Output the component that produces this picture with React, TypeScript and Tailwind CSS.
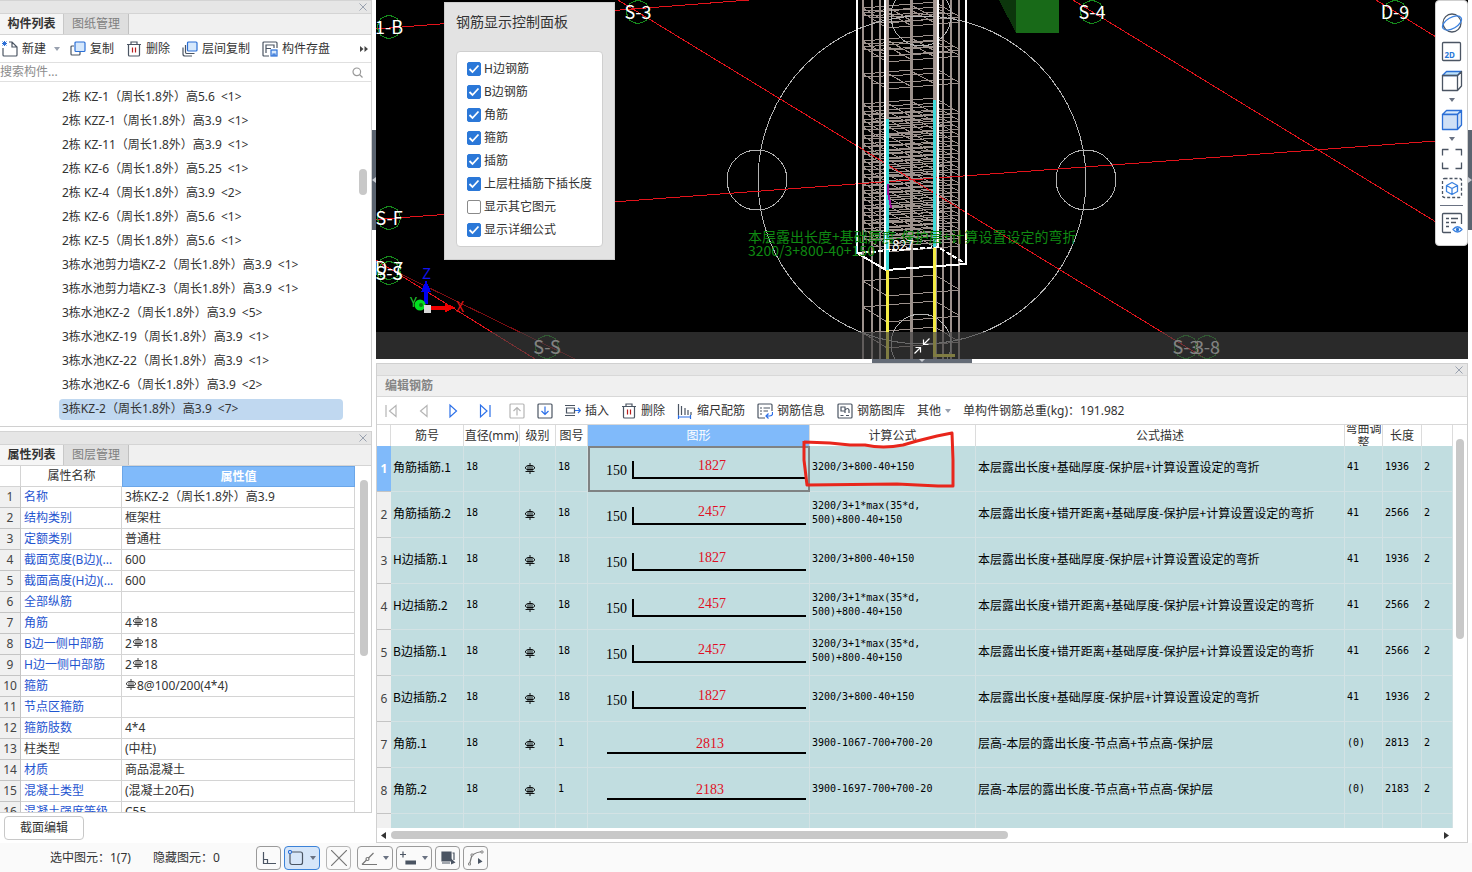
import React, { useState } from "react";

const Rebar = ({ className = "" }: { className?: string }) => (
  <svg className={"inline-block " + className} width="10" height="11" viewBox="0 0 10 11" fill="none" stroke="currentColor">
    <path d="M5 0v11M3 2.500v6M7 2.500v6M.5 8.500h9M2.500 2.500h5L9.500 4V5.500L8 6.500H2L.5 5.500V4z" strokeWidth="0.900" />
  </svg>
);

const Caret = ({ className = "text-gray-500" }: { className?: string }) => (
  <svg className={className} width="6" height="4" viewBox="0 0 6 4"><path d="M0 0h6L3 4z" fill="currentColor" /></svg>
);

const Close = () => (
  <button aria-label="关闭" className="flex h-3 w-4 items-center justify-center text-gray-400">
    <svg width="8" height="8" viewBox="0 0 8 8" stroke="currentColor"><path d="M.5.5l7 7M7.500.5l-7 7" /></svg>
  </button>
);

const Trash = () => (
  <svg width="16" height="16" viewBox="0 0 16 16" fill="none" stroke="#4b5563" strokeWidth="1.2">
    <path d="M1 3.500h14M5 3.500V1h6v2.500M2.500 3.500V14q0 1 1 1h9q1 0 1-1V3.500" />
    <path d="M6.500 6.500v5M9.500 6.500v5" stroke="#b91c1c" />
  </svg>
);

const NewIcon = () => (
  <svg width="16" height="16" viewBox="0 0 16 16" fill="none" stroke="#4b5563" strokeWidth="1.2">
    <path d="M1 7v7q0 1 1 1h12q1 0 1-1V6l-5-5H7M10 1v5h5" />
    <path d="M.5.5l4 4M4.500.5l-4 4M2.500 0v5M0 2.500h5" stroke="#2b6fd6" strokeWidth="1" />
  </svg>
);

const CopyIcon = () => (
  <svg width="16" height="16" viewBox="0 0 16 16" fill="none" strokeWidth="1.2">
    <path d="M4 5H2Q1 5 1 6v7q0 1 1 1h7q1 0 1-1v-2" stroke="#4b5563" />
    <rect x="5" y="1" width="10" height="9.500" rx="1" fill="#d6e8fc" stroke="#2b6fd6" />
  </svg>
);

const LayerCopyIcon = () => (
  <svg width="16" height="16" viewBox="0 0 16 16" fill="none" strokeWidth="1.2">
    <path d="M3.500 4v7q0 1.500 1 1.500h8M1 6.500V13q0 2 2 2h7" stroke="#4b5563" />
    <rect x="5.500" y="1" width="9.500" height="9" rx="1" fill="#d6e8fc" stroke="#2b6fd6" />
  </svg>
);

const SaveIcon = () => (
  <svg width="16" height="16" viewBox="0 0 16 16" fill="none" stroke="#4b5563" strokeWidth="1.2">
    <path d="M7 15H2q-1 0-1-1V2q0-1 1-1h12q1 0 1 1v5M4 12V4h8v3M4 7.500h5" />
    <rect x="9" y="9" width="6" height="6" fill="#d6e8fc" stroke="#2b6fd6" />
    <path d="M11 15v-2h2v2" stroke="#2b6fd6" />
  </svg>
);

const toolBtn = "flex items-center gap-1 whitespace-nowrap";

function PanelHead({ tabs }: { tabs: string[] }) {
  return (
    <>
      <div className="flex h-[13px] shrink-0 justify-end border-t border-[#d4d4d4] bg-[#e6e6e6]"><Close /></div>
      <div className="flex h-[22px] shrink-0 border-y border-[#d4d4d4] bg-[#f0f0f0]">
        <button className="w-16 border-r border-[#c8c8c8] bg-[#f5f5f5] font-bold">{tabs[0]}</button>
        <button className="w-[65px] border-r border-[#c0c0c0] bg-[#dedede] text-[#808080]">{tabs[1]}</button>
      </div>
    </>
  );
}

const members: [string, number][] = [
  ["2栋 KZ-1（周长1.8外）高5.6", 1],
  ["2栋 KZZ-1（周长1.8外）高3.9", 1],
  ["2栋 KZ-11（周长1.8外）高3.9", 1],
  ["2栋 KZ-6（周长1.8外）高5.25", 1],
  ["2栋 KZ-4（周长1.8外）高3.9", 2],
  ["2栋 KZ-6（周长1.8外）高5.6", 1],
  ["2栋 KZ-5（周长1.8外）高5.6", 1],
  ["3栋水池剪力墙KZ-2（周长1.8外）高3.9", 1],
  ["3栋水池剪力墙KZ-3（周长1.8外）高3.9", 1],
  ["3栋水池KZ-2（周长1.8外）高3.9", 5],
  ["3栋水池KZ-19（周长1.8外）高3.9", 1],
  ["3栋水池KZ-22（周长1.8外）高3.9", 1],
  ["3栋水池KZ-6（周长1.8外）高3.9", 2],
  ["3栋KZ-2（周长1.8外）高3.9", 7],
];

function MemberPanel() {
  return (
    <section className="flex h-[427px] shrink-0 flex-col border-b border-r border-[#d0d0d0]">
      <PanelHead tabs={["构件列表", "图纸管理"]} />
      <div className="flex h-7 shrink-0 items-center border-b border-[#e0e0e0] pl-0.5">
        <button className={toolBtn}><NewIcon />新建<span className="pl-1"><Caret className="text-gray-400" /></span></button>
        <button className={toolBtn + " ml-2.5"}><CopyIcon />复制</button>
        <button className={toolBtn + " ml-3"}><Trash />删除</button>
        <button className={toolBtn + " ml-3"}><LayerCopyIcon />层间复制</button>
        <button className={toolBtn + " ml-3"}><SaveIcon />构件存盘</button>
        <button aria-label="更多" className="ml-auto mr-0.5 flex h-5 w-2.5 items-center justify-center">
          <svg width="8" height="6" viewBox="0 0 8 6" fill="#444"><path d="M0 0l3.500 3L0 6zM4.500 0L8 3 4.500 6z" /></svg>
        </button>
      </div>
      <label className="flex h-[19px] shrink-0 items-center border-b border-[#e0e0e0] pr-2">
        <input aria-label="搜索构件" placeholder="搜索构件..." className="min-w-0 flex-1 outline-none placeholder:text-[#8c8c8c]" />
        <svg width="11" height="11" viewBox="0 0 11 11" fill="none" stroke="#999" strokeWidth="1.2"><circle cx="4.800" cy="4.800" r="3.800" /><path d="M7.500 7.500l3 3" /></svg>
      </label>
      <div className="flex min-h-0 flex-1 pt-[3px]">
        <ul className="flex-1 pl-[59px]">
          {members.map(([name, count], i) => (
            <li key={i} className="flex h-6 items-center">
              <button className={"flex h-[21px] w-[284px] items-center gap-1.5 whitespace-nowrap rounded-sm pl-[3px] text-left " + (i === 13 ? "bg-[#c0d8f0]" : "")}>
                <span>{name}</span><span>{`<${count}>`}</span>
              </button>
            </li>
          ))}
        </ul>
        <div className="w-3 pt-[84px]"><div className="h-[26px] w-2 rounded-full bg-[#c8c8c8]" /></div>
      </div>
    </section>
  );
}

const props: [string, React.ReactNode][] = [
  ["名称", "3栋KZ-2（周长1.8外）高3.9"],
  ["结构类别", "框架柱"],
  ["定额类别", "普通柱"],
  ["截面宽度(B边)(...", "600"],
  ["截面高度(H边)(...", "600"],
  ["全部纵筋", ""],
  ["角筋", <>4<Rebar className="mx-px mb-1" />18</>],
  ["B边一侧中部筋", <>2<Rebar className="mx-px mb-1" />18</>],
  ["H边一侧中部筋", <>2<Rebar className="mx-px mb-1" />18</>],
  ["箍筋", <><Rebar className="mx-px mb-1" />8@100/200(4*4)</>],
  ["节点区箍筋", ""],
  ["箍筋肢数", "4*4"],
  ["柱类型", "(中柱)"],
  ["材质", "商品混凝土"],
  ["混凝土类型", "(混凝土20石)"],
  ["混凝土强度等级", "C55"],
];

function PropertyPanel() {
  return (
    <section className="flex min-h-0 flex-1 flex-col">
      <div className="flex min-h-0 flex-1 flex-col overflow-hidden border-b border-r border-[#d0d0d0]">
        <PanelHead tabs={["属性列表", "图层管理"]} />
        <div className="flex min-h-0 flex-1 overflow-hidden">
          <table className="h-fit flex-1 table-fixed border-separate border-spacing-0">
            <colgroup><col className="w-[21px]" /><col className="w-[101px]" /><col /></colgroup>
            <thead>
              <tr className="h-[21px]">
                <th className="border-b border-r border-[#d4d4d4]" />
                <th className="border-b border-[#d4d4d4] font-normal">属性名称</th>
                <th className="border border-[#6ba6e8] bg-[#80bafa] text-white">属性值</th>
              </tr>
            </thead>
            <tbody>
              {props.map(([k, v], i) => (
                <tr key={i} className="h-[21px]">
                  <td className="border-b border-r border-[#c4c4c4] bg-[#f0f0f0] text-center text-[#444]">{i + 1}</td>
                  <td className={"overflow-hidden whitespace-nowrap border-b border-r border-[#d4d4d4] pl-[3px] " + (i === 12 ? "" : "text-[#1f55d0]")}>{k}</td>
                  <td className="whitespace-nowrap border-b border-r border-[#d4d4d4] pl-[3px]">{v}</td>
                </tr>
              ))}
            </tbody>
          </table>
          <div className="w-4 pl-[5px] pt-[14px]"><div className="h-[176px] w-2 rounded-full bg-[#c8c8c8]" /></div>
        </div>
      </div>
      <div className="flex h-[30px] shrink-0 items-center pl-1">
        <button className="h-6 w-20 rounded border border-[#c8c8c8] bg-white">截面编辑</button>
      </div>
    </section>
  );
}

const tieLevels = [8, 13, 41, 47, 74, 104, 112, 120, 127, 136, 144, 152, 160, 167, 175, 183, 191, 198, 206, 213, 221, 229, 237, 281, 307, 333];
const bars: [number, number][] = [[863, 2], [872, 2], [880, 2], [887.5, 3], [911.5, 3], [935, 4], [943, 2], [951, 2], [959, 2]];
const gridLabels: [number, number, string][] = [[389, 27, "1-B"], [638, 12, "S-3"], [389, 218, "S-F"], [389, 268, "D-7"], [389, 273, "S-S"], [1092, 12, "S-4"], [1395, 12, "D-9"], [547, 347, "S-S"], [1186, 347, "S-3"], [1207, 347, "3-8"]];

function Scene() {
  return (
    <svg className="block h-full w-full" viewBox="376 0 1092 359" preserveAspectRatio="xMidYMid slice" fill="none" shapeRendering="crispEdges">
      <path d="M999 0h17v33z" fill="#0c360c" />
      <path d="M1016 0h43v33h-43z" fill="#186a18" />
      <g stroke="#9c918c">
        {bars.map(([x, w]) => <path key={x} d={`M${x} 0V359`} strokeWidth={w} />)}
        {tieLevels.map((y) => (
          <g key={y}>
            <path d={`M863 ${y}L935 ${y - 6}L960 ${y + 9}L887 ${y + 15}Z`} />
            {y < 250 && <path d={`M863 ${y + 3}L943 ${y - 1}M872 ${y + 10}L954 ${y + 5}M885 ${y - 2}L912 ${y + 13}M909 ${y - 4}L937 ${y + 11}`} />}
          </g>
        ))}
      </g>
      <g stroke="#b4b4b4">
        <circle cx="922" cy="180" r="164" />
        <circle cx="757" cy="180" r="30" />
        <circle cx="1086" cy="180" r="30" />
        <circle cx="921" cy="16" r="30" />
        <circle cx="921" cy="344" r="30" />
      </g>
      <g stroke="#e3131b">
        <path d="M376 262L575 359" stroke="#7d0d12" />
        <path d="M376 29L762 -1M618 0L1206 359M376 219.500L1436 141M1073 0L1436 222M1376 0L1436 37M376 260L535 359" />
      </g>
      <g stroke="#fff" strokeWidth="2">
        <path d="M857 0V253L886 270L966 264V0M885 0V270M938 0V247" />
        <path d="M857 253L938 247L966 264" strokeDasharray="5 2" />
      </g>
      <path d="M887.500 0V119M935 0V100" stroke="#a59691" strokeWidth="3" />
      <path d="M887.500 119V270M934.500 100V247" stroke="#3fdcdc" strokeWidth="3" />
      <path d="M887.500 270V359M934.500 248V355H955" stroke="#f3ec45" strokeWidth="3" />
      <path d="M888 184V192L891 208" stroke="#a0109a" strokeWidth="2" />
      <g fill="#0f8a12" fontSize="14">
        <text x="748" y="242">本层露出长度+基础厚度-保护层+计算设置设定的弯折</text>
        <text x="748" y="256">3200/3+800-40+150</text>
      </g>
      <text x="885" y="250" fontSize="13" fill="#fff">1827</text>
      {gridLabels.map(([x, y, t], i) => (
        <g key={i}>
          <path d={`M${x} ${y - 12}l8.500 3.500 3.500 8.500-3.500 8.500-8.500 3.500-8.500-3.500-3.500-8.500 3.500-8.500z`} stroke="#168a1c" />
          <text x={x} y={y + 7} fontSize="18" fill="#fff" textAnchor="middle">{t}</text>
        </g>
      ))}
      <path d="M430 306h15v-3l10 4.500-10 5v-3h-15z" fill="#f00000" />
      <path d="M424 304v-12h-3l5-12 5 12h-3v12z" fill="#0000f0" />
      <g shapeRendering="auto">
        <circle cx="420" cy="305" r="5.500" fill="#00e020" />
        <circle cx="421" cy="305" r="2" fill="#087a14" />
      </g>
      <path d="M424 305h7v8h-7z" fill="#d8d8d8" />
      <text x="422" y="279" fontSize="15" fill="#1414f0">Z</text>
      <text x="456" y="312" fontSize="14" fill="#e01818">X</text>
      <text x="410" y="307" fontSize="13" fill="#20c830">Y</text>
    </svg>
  );
}

const options = ["H边钢筋", "B边钢筋", "角筋", "箍筋", "插筋", "上层柱插筋下插长度", "显示其它图元", "显示详细公式"];

function DisplayDialog() {
  const [on, setOn] = useState(options.map((_, i) => i !== 6));
  return (
    <div role="dialog" aria-label="钢筋显示控制面板" className="absolute left-[68px] top-0.5 w-[171px] border border-[#cfcfcf] bg-[#e3e3e3] px-[11px] pb-3">
      <h2 className="pt-[7px] text-sm leading-6 text-[#333]">钢筋显示控制面板</h2>
      <div className="mt-[17px] rounded border border-[#cfcfcf] bg-white px-[10px] py-[5px]">
        {options.map((o, i) => (
          <label key={o} className="flex h-[23px] items-center gap-[3px] whitespace-nowrap">
            <span className="relative block size-3.5">
              <input type="checkbox" checked={on[i]} onChange={() => setOn(on.map((v, j) => (j === i ? !v : v)))} className="block size-3.5 appearance-none rounded-[2px] border border-[#8a8a8a] bg-white checked:border-[#2b78d8] checked:bg-[#2b78d8]" />
              {on[i] && <svg className="pointer-events-none absolute inset-0" width="14" height="14" viewBox="0 0 14 14" fill="none" stroke="#fff" strokeWidth="1.800"><path d="M2.500 7l3 3 6-6.500" /></svg>}
            </span>
            {o}
          </label>
        ))}
      </div>
    </div>
  );
}

const I = ({ children }: { children: React.ReactNode }) => (
  <svg width="22" height="22" viewBox="0 0 22 22" fill="none" stroke="#4b5563" strokeWidth="1.300" strokeLinejoin="round">{children}</svg>
);

function ViewTools() {
  return (
    <div className="absolute right-0 top-0 flex h-[246px] w-[33px] flex-col items-center rounded border border-[#cfcfcf] bg-white pt-[11px]">
      <button aria-label="动态观察" className="mb-[7px]"><I><circle cx="11" cy="11" r="9" /><ellipse cx="11" cy="11" rx="10.500" ry="5.500" transform="rotate(-30 11 11)" stroke="#3b82e0" /></I></button>
      <button aria-label="二维" className="mb-[7px]"><I><rect x="1.500" y="1.500" width="18" height="18" rx="1" /><text x="3.500" y="17" fontSize="8" fontWeight="700" fill="#2b78d8" stroke="none">2D</text></I></button>
      <button aria-label="俯视" className="mb-1.5"><I><path d="M1.500 5.500l4-4h15l-4 4z" fill="#bfe3fa" stroke="#2b6fd6" /><path d="M1.500 5.500h15v15h-15zM16.500 5.500l4-4V16l-4 4.500" /></I></button>
      <button aria-label="俯视选项" className="mb-[7px]"><Caret /></button>
      <button aria-label="着色" className="mb-1.5"><I><path d="M1.500 5.500l4-4h15l-4 4z" fill="#d6e8fc" stroke="#2b6fd6" /><path d="M1.500 5.500h15v15h-15zM16.500 5.500l4-4V16l-4 4.500" fill="#cfe0f6" stroke="#2b6fd6" /></I></button>
      <button aria-label="着色选项" className="mb-[7px]"><Caret /></button>
      <button aria-label="全屏" className="mb-[7px]"><I><path d="M1.500 7.500v-6h6M14.500 1.500h6v6M20.500 14.500v6h-6M7.500 20.500h-6v-6" /></I></button>
      <button aria-label="局部三维" className="mb-1.5"><I><rect x="1.500" y="1.500" width="19" height="19" rx="2" strokeDasharray="3 2" /><path d="M11 5.500l5.500 3v6L11 17.500l-5.500-3v-6zM5.500 8.500L11 11.500l5.500-3M11 11.500v6" stroke="#3b82e0" /></I></button>
      <div className="mb-1.5 h-px w-[23px] shrink-0 bg-gray-500" />
      <button aria-label="显示设置"><I><path d="M10 20.500H2.500q-1 0-1-1v-17q0-1 1-1h17q1 0 1 1V12M5 6.500h3M10 6.500h7M5 10.500h3M10 10.500h5M5 14.500h3" /><path d="M12 17.500q4.500-5.500 9 0q-4.500 5-9 0z" stroke="#3b82e0" /><circle cx="16.500" cy="17.500" r="1" fill="#2b78d8" stroke="#2b78d8" /></I></button>
    </div>
  );
}

type Row = { n: string; t: string; len: string; f: string; d: string; adj: string; red: string };
const F1 = "3200/3+800-40+150";
const F2 = "3200/3+1*max(35*d,\n500)+800-40+150";
const D1 = "本层露出长度+基础厚度-保护层+计算设置设定的弯折";
const D2 = "本层露出长度+错开距离+基础厚度-保护层+计算设置设定的弯折";
const D3 = "层高-本层的露出长度-节点高+节点高-保护层";
const bent = (n: string, red: string): Row =>
  red === "1827" ? { n, t: "18", len: "1936", f: F1, d: D1, adj: "41", red } : { n, t: "18", len: "2566", f: F2, d: D2, adj: "41", red };
const rows: Row[] = [
  bent("角筋插筋.1", "1827"),
  bent("角筋插筋.2", "2457"),
  bent("H边插筋.1", "1827"),
  bent("H边插筋.2", "2457"),
  bent("B边插筋.1", "2457"),
  bent("B边插筋.2", "1827"),
  { n: "角筋.1", t: "1", len: "2813", f: "3900-1067-700+700-20", d: D3, adj: "(0)", red: "2813" },
  { n: "角筋.2", t: "1", len: "2183", f: "3900-1697-700+700-20", d: D3, adj: "(0)", red: "2183" },
];

const Shape = ({ row }: { row: Row }) => (
  <svg className="mx-auto block" width="218" height="42" viewBox="0 0 218 42" fill="none" stroke="#000" strokeWidth="2" fontSize="14" fontFamily="'Liberation Serif', serif">
    {row.t === "18" ? (
      <>
        <path d="M43 13V30H216" />
        <text x="16" y="27" fill="#000" stroke="none">150</text>
        <text x="108" y="22" fill="#e00f24" stroke="none">{row.red}</text>
      </>
    ) : (
      <>
        <path d="M17 29H216" />
        <text x="106" y="24" fill="#e00f24" stroke="none">{row.red}</text>
      </>
    )}
  </svg>
);

const mono = "font-['DejaVu_Sans_Mono','Noto_Sans_CJK_SC',monospace] text-[10px] leading-3.5";
const cell = "border-b border-r border-[#d3e2e4] pl-0.5 pb-1 ";
const head = "h-5 border-r border-[#dcdcdc] p-0 font-normal";

function RebarTable() {
  const cols: [string, string][] = [["", "w-[14px]"], ["筋号", "w-[73px]"], ["直径(mm)", "w-[56px]"], ["级别", "w-[36px]"], ["图号", "w-[32px]"], ["图形", "w-[222px]"], ["计算公式", "w-[166px]"], ["公式描述", "w-[369px]"], ["弯曲调整", "w-[38px]"], ["长度", "w-[39px]"], ["", ""]];
  return (
    <div className="relative min-w-0 flex-1 overflow-hidden bg-[#c1dde0]">
      <table className="w-full table-fixed border-separate border-spacing-0 text-black">
        <colgroup>{cols.map(([, w], i) => <col key={i} className={w} />)}</colgroup>
        <thead>
          <tr className="bg-white text-[#333]">
            {cols.map(([c], i) => (
              <th key={i} className={head + (i === 5 ? " bg-[#80bafa] text-white" : "")}>
                <div className={"flex h-[21px] items-center justify-center overflow-hidden text-center leading-3.5 " + (i === 8 ? "" : "whitespace-nowrap")}>{c}</div>
              </th>
            ))}
          </tr>
        </thead>
        <tbody>
          {rows.map((r, i) => (
            <tr key={i} className="h-[46px]">
              <td className={"border-b border-[#c4c4c4] p-0 text-center " + (i === 0 ? "bg-[#80bafa] font-bold text-white" : "bg-[#f0f0f0] text-[#444]")}>{i + 1}</td>
              <td className={cell + "whitespace-nowrap font-['Noto_Sans_CJK_SC',sans-serif]"}>{r.n}</td>
              <td className={cell + mono}>18</td>
              <td className={cell + "pl-[5px]"}><Rebar className="mt-0.5" /></td>
              <td className={cell + mono}>{r.t}</td>
              <td className={i === 0 ? "border-2 border-[#7f8283] p-0" : "border-b border-r border-[#d3e2e4] p-0"}><Shape row={r} /></td>
              <td className={cell + mono + " whitespace-pre"}>{r.f}</td>
              <td className={cell + "whitespace-nowrap font-['Noto_Sans_CJK_SC',sans-serif]"}>{r.d}</td>
              <td className={cell + mono}>{r.adj}</td>
              <td className={cell + mono}>{r.len}</td>
              <td className={cell + mono}>2</td>
            </tr>
          ))}
          <tr className="h-[46px]">{cols.map((_, i) => <td key={i} className={i === 0 ? "bg-[#f0f0f0]" : cell} />)}</tr>
        </tbody>
      </table>
      <svg className="pointer-events-none absolute left-[424px] top-1.5" width="156" height="60" viewBox="801 431 156 60" fill="none" stroke="#e8261c" strokeWidth="3" strokeLinejoin="round">
        <path d="M804 442L830 443L850 445L865 445Q883 449 903 445L917 441L937 436L952 433L953 460V486H938L897 484L807 485L804 460V441" />
      </svg>
    </div>
  );
}

const G = ({ children, c = "#4b5563" }: { children: React.ReactNode; c?: string }) => (
  <svg width="16" height="16" viewBox="0 0 16 16" fill="none" stroke={c} strokeWidth="1.200">{children}</svg>
);

function EditPanel() {
  return (
    <section className="flex min-h-0 flex-1 flex-col border border-[#d0d0d0]">
      <div className="flex h-[11px] shrink-0 items-center justify-end bg-[#e6e6e6]"><Close /></div>
      <h2 className="flex h-[22px] shrink-0 items-center border-y border-[#d8d8d8] bg-[#f0f0f0] pl-2 font-bold text-[#858585]">编辑钢筋</h2>
      <div className="flex h-7 shrink-0 items-center whitespace-nowrap border-b border-[#d8d8d8] pl-1.5">
        <button aria-label="首行" className="mr-4"><G c="#b5b5b5"><path d="M3 2v12M13 2.500v11L6.500 8z" /></G></button>
        <button aria-label="上一行" className="mr-3.5"><G c="#b5b5b5"><path d="M12 2.500v11L5.500 8z" /></G></button>
        <button aria-label="下一行" className="mr-4"><G c="#2b6fe8"><path d="M5 2v12L11.500 8z" /></G></button>
        <button aria-label="末行" className="mr-4"><G c="#2b6fe8"><path d="M3.500 2v12L10 8zM13 2v12" /></G></button>
        <button aria-label="上移" className="mr-3"><G c="#b5b5b5"><rect x="1" y="1" width="14" height="14" rx="1" /><path d="M8 12.500V4.500M4.500 8L8 4.500 11.500 8" /></G></button>
        <button aria-label="下移" className="mr-3"><G><rect x="1" y="1" width="14" height="14" rx="1" /><path d="M8 3.500v8M4.500 8L8 11.500 11.500 8" stroke="#2b6fe8" /></G></button>
        <button className={toolBtn + " mr-3"}><G><path d="M0 2.500h10M0 12.500h10M1.500 5h8v5h-8z" /><path d="M10 7.500h5.500M13 5l2.500 2.500L13 10" stroke="#2b6fe8" /></G>插入</button>
        <button className={toolBtn + " mr-3"}><Trash />删除</button>
        <button className={toolBtn + " mr-3"}><G><path d="M1.500 1v11M4.500 3v9M8 5v7M11 7v5M14 9v3" /><path d="M1 14h13M1.500 12v4M13.500 12v4" stroke="#2b6fe8" /></G>缩尺配筋</button>
        <button className={toolBtn + " mr-3"}><G><path d="M8 15H2q-1 0-1-1V2q0-1 1-1h12q1 0 1 1v6M3 5h2M6.500 5H13M3 8h2M6.500 8H11M3 11h2" /><path d="M15.500 9v2q0 2-3 2H9M11.500 10.500L9 13l2.500 2.500" stroke="#2b6fe8" /></G>钢筋信息</button>
        <button className={toolBtn + " mr-3"}><G><rect x="1" y="1" width="14" height="14" rx="1" /><path d="M4 4h4v4H4zM8 10V7q3-3 4 0v3M3.500 12.500h3M9 12.500h3" /></G>钢筋图库</button>
        <button className={toolBtn + " mr-3"}>其他<Caret className="text-gray-400" /></button>
        <span>单构件钢筋总重(kg)：191.982</span>
      </div>
      <div className="flex min-h-0 flex-1">
        <RebarTable />
        <div className="w-3.5 pl-[3px] pt-3.5"><div className="h-[200px] w-2 rounded-full bg-[#c8c8c8]" /></div>
      </div>
      <div className="flex h-3.5 shrink-0 items-center justify-between pl-1 pr-[18px]">
        <div className="flex flex-1 items-center gap-[5px]">
          <svg width="5" height="7" viewBox="0 0 5 7"><path d="M5 0v7L0 3.500z" fill="#333" /></svg>
          <div className="h-2 w-[58%] rounded-full bg-[#c8c8c8]" />
        </div>
        <svg width="5" height="7" viewBox="0 0 5 7"><path d="M0 0v7l5-3.500z" fill="#333" /></svg>
      </div>
    </section>
  );
}

const sBtn = "flex h-6 items-center justify-center rounded border ";

function StatusBar() {
  return (
    <footer className="flex h-[29px] shrink-0 items-center bg-[#fafafa] pl-[50px] pt-px">
      <span className="w-[103px]">选中图元：1(7)</span>
      <span className="w-[103px]">隐藏图元：0</span>
      <div className="flex items-center gap-[3px]">
        <button aria-label="正交" className={sBtn + "w-[25px] border-[#9a9a9a]"}><G><path d="M2.500 2v11.500H15M2.500 9.500h4v4" /></G></button>
        <button aria-label="矩形选择" className={sBtn + "w-9 gap-1.5 border-[#3b82d8] bg-[#d6e6f9]"}><G><rect x="2" y="2" width="12.500" height="12.500" rx="2" /><circle cx="2" cy="2" r="1.500" fill="#fff" stroke="#2b6fd6" /></G><Caret /></button>
        <button aria-label="交点" className={sBtn + "mx-[3px] w-[25px] border-[#b5b5b5]"}><G c="#777"><path d="M0 0l16 16M16 0L0 16" /></G></button>
        <button aria-label="角度" className={sBtn + "w-9 gap-1.5 border-[#9a9a9a]"}><G c="#777"><path d="M1 14.500h15M1 14.500L12.500 3" /><circle cx="6.500" cy="9" r="1.500" fill="#fff" /></G><Caret /></button>
        <button aria-label="偏移" className={sBtn + "w-9 gap-1.5 border-[#9a9a9a]"}><G><path d="M0 4.500h6M3 1.500v6" /><path d="M6 11h10v3H6z" fill="#4b5563" /></G><Caret /></button>
        <button aria-label="图层" className={sBtn + "w-[25px] border-[#9a9a9a]"}><G><path d="M2 2h9v9H2z" fill="#4b5563" /><path d="M12.500 3H14v7M2 13h8" /><path d="M11 8.500l4.500 4-4.500 2z" fill="#4b5563" stroke="none" /></G></button>
        <button aria-label="折线" className={sBtn + "w-[25px] border-[#9a9a9a]"}><G c="#777"><path d="M1.500 14L4 5q5-3 10-3.500" /><path d="M10 8l4.500 3.500L10 14z" fill="#4b5563" stroke="none" /><path d="M.5 13h2v2h-2zM3 4h2v2H3zM13 1h2v2h-2z" fill="#fff" strokeWidth="0.800" /></G></button>
      </div>
    </footer>
  );
}

const Grip = ({ d }: { d: string }) => (
  <button aria-label="折叠" className="mt-[130px] flex h-[100px] w-full items-center justify-center bg-[#5b6470]">
    <svg width="4" height="6" viewBox="0 0 4 6"><path d={d} fill="#c8ccd2" /></svg>
  </button>
);

export default function App() {
  return (
    <div className="flex h-screen flex-col overflow-hidden bg-white font-['Noto_Sans','Noto_Sans_CJK_SC',sans-serif] text-xs text-[#333]">
      <main className="flex min-h-0 flex-1">
        <div className="flex w-[372px] shrink-0 flex-col gap-1">
          <MemberPanel />
          <PropertyPanel />
        </div>
        <div className="w-1 shrink-0"><Grip d="M4 0v6L0 3z" /></div>
        <div className="flex min-w-0 flex-1 flex-col">
          <div className="relative h-[359px] shrink-0 overflow-hidden bg-black font-['Noto_Sans_CJK_SC',sans-serif]">
            <Scene />
            <div className="absolute inset-x-0 bottom-0 flex h-[27px] items-center justify-center bg-[#404040]/65">
              <button aria-label="收起">
                <svg width="16" height="16" viewBox="0 0 16 16" fill="none" stroke="#fff" strokeWidth="1.200"><path d="M15.500.5L9.500 6.500M9.500 1.500v5h5M.5 15.500l6-6M6.500 14.500v-5h-5" /></svg>
              </button>
            </div>
            <div className="font-['Noto_Sans','Noto_Sans_CJK_SC',sans-serif]">
              <DisplayDialog />
              <ViewTools />
            </div>
          </div>
          <button aria-label="折叠面板" className="mx-auto flex h-1 w-[100px] shrink-0 justify-center bg-[#646b76]">
            <svg width="6" height="3" viewBox="0 0 6 3"><path d="M0 0h6L3 3z" fill="#c8ccd2" /></svg>
          </button>
          <EditPanel />
        </div>
        <div className="w-1 shrink-0"><Grip d="M0 0v6l4-3z" /></div>
      </main>
      <StatusBar />
    </div>
  );
}
